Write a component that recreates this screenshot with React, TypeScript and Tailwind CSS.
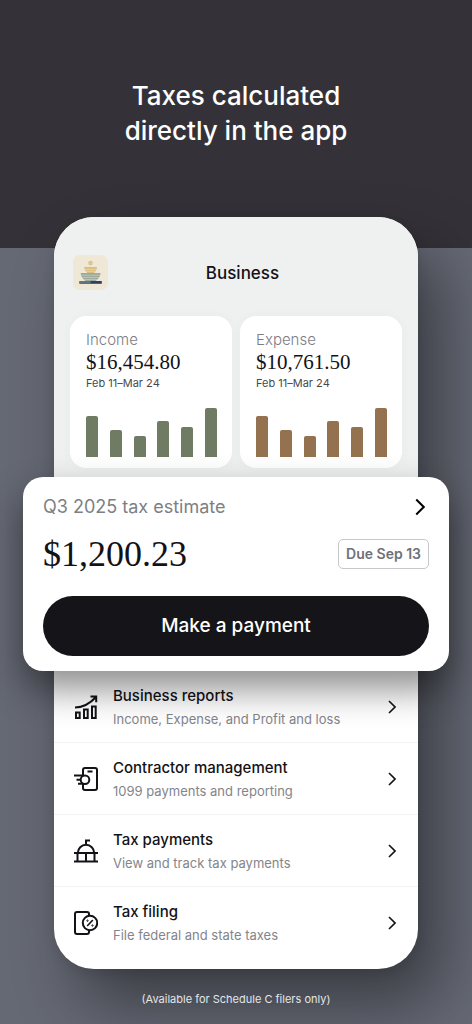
import React from 'react';

interface ChartCardProps {
  label: string;
  amount: string;
  barClass: string;
}

interface MenuRowProps {
  title: string;
  text: string;
  icon: React.ReactNode;
}

const bars = [41, 27, 21, 36, 30, 49];

const Logo = () => (
  <svg viewBox="0 0 35 35" className="size-[35px]" role="img" aria-label="Business logo">
    <rect width="35" height="35" rx="7" fill="#efe8d6" />
    <circle cx="17.5" cy="8" r="2.3" fill="#d9c08a" />
    <path d="M15.4 8h4.2" stroke="#e8d9b4" strokeWidth=".6" />
    <path d="M11.2 12h12.8c-.3 3-1.6 4.8-3 6h-6.8c-1.5-1.2-2.7-3-3-6z" fill="#dcbe7c" />
    <path d="M12 14.3h11.2M13 16.3h9.2" stroke="#eee0bc" strokeWidth=".6" />
    <path d="M7.6 18h20c-.4 3.8-2.4 6.4-5 8h-10c-2.6-1.6-4.6-4.2-5-8z" fill="#9dab9f" />
    <path d="M8.2 20.3h18.8M9.4 22.5h16.4M11 24.5h13.2" stroke="#c9cfc0" strokeWidth=".7" />
    <rect x="6.500" y="26" width="22.300" height="2.800" fill="#2c4260" />
    <rect x="6.500" y="26" width="11" height="2.800" fill="#667480" />
  </svg>
);

const iconProps = {
  viewBox: '0 0 24 24',
  fill: 'none',
  stroke: 'currentColor',
  strokeWidth: 2,
  className: 'size-6 shrink-0',
  'aria-hidden': true,
};

const ReportsIcon = () => (
  <svg {...iconProps}>
    <path d="M1 12.500c9 0 15-4 21-10.500M16.500 1.500h5.700v5.700" />
    <path d="M2 17.500h3.700v5.500H2zM10 14.500h3.700V23H10zM18 11.500h3.700V23H18z" />
  </svg>
);

const ContractorIcon = () => (
  <svg {...iconProps}>
    <path d="M9 8V3a2 2 0 0 1 2-2h10a2 2 0 0 1 2 2v18a2 2 0 0 1-2 2H11a2 2 0 0 1-2-2v-4" />
    <circle cx="11" cy="12.700" r="4.300" />
    <path d="M0 8.600h9M2.500 12.700h4M4 16.800h5M13.500 4.500h5" />
  </svg>
);

const PaymentsIcon = () => (
  <svg {...iconProps}>
    <path d="M0 14h24M0 22.500h24M3.500 14v8.500M20.500 14v8.500M12 14v8.500" />
    <path d="M3.800 14a8.200 8.200 0 0 1 16.400 0M12 6V1.500h4" />
  </svg>
);

const FilingIcon = () => (
  <svg {...iconProps}>
    <path d="M15 5V3a2 2 0 0 0-2-2H3a2 2 0 0 0-2 2v18a2 2 0 0 0 2 2h10a2 2 0 0 0 2-2v-2" />
    <circle cx="16" cy="12" r="7.200" />
    <path d="M13.200 15l5.600-6" strokeWidth="1.600" />
    <circle cx="13.500" cy="9.700" r=".7" strokeWidth="1" />
    <circle cx="18.500" cy="14.500" r=".7" strokeWidth="1" />
  </svg>
);

const Chevron = ({ className }: { className: string }) => (
  <svg viewBox="0 0 8 14" fill="none" stroke="currentColor" strokeWidth="1.600" className={className} aria-hidden="true">
    <path d="M1 1l6 6-6 6" />
  </svg>
);

const ChartCard = ({ label, amount, barClass }: ChartCardProps) => (
  <section className="flex-1 rounded-2xl bg-white pt-3.5 pr-[15px] pb-[11px] pl-4 shadow-[0_0_12px_rgba(0,0,0,0.03)]">
    <h2 className="text-[15px] leading-5 font-light text-[#7b7d83]">{label}</h2>
    <p className="font-['Liberation_Serif',serif] text-[21px] leading-6 text-[#131217]">{amount}</p>
    <p className="text-[11px] leading-[18px] text-[#48494f]">Feb 11–Mar 24</p>
    <div className="mt-4 flex h-[49px] items-end justify-between">
      {bars.map((height, i) => (
        <div key={i} className={`w-3 rounded-t-xs ${barClass}`} style={{ height }} />
      ))}
    </div>
  </section>
);

const MenuRow = ({ title, text, icon }: MenuRowProps) => (
  <li className="border-b border-[#f3f3f4] last:border-transparent">
    <a href="#" className="flex h-[71px] items-center gap-[15px] pr-[22px] pl-5 text-[#131217]">
      {icon}
      <span className="flex-1">
        <span className="block text-[15px] leading-6 font-medium">{title}</span>
        <span className="block text-[13px] leading-[22px] text-[#83858b]">{text}</span>
      </span>
      <Chevron className="h-3.5 w-2" />
    </a>
  </li>
);

const App = () => {
  return (
    <main className="min-h-screen overflow-hidden bg-[#656974] font-['Inter',sans-serif]">
      <header className="bg-[#343238] pt-[78px] pb-[100px] text-center">
        <h1 className="text-[26px] leading-[35px] font-medium text-white">
          Taxes calculated
          <br />
          directly in the app
        </h1>
      </header>

      <div className="relative mx-[54px] -mt-[31px] rounded-[40px] bg-white pb-2.5 shadow-[24px_36px_64px_rgba(0,0,0,0.42),0_4px_12px_rgba(0,0,0,0.1)]">
        <div className="rounded-t-[40px] bg-[#eff1f1] pt-[38px] pb-[9px]">
          <div className="flex items-center pr-[41px] pl-[19px]">
            <Logo />
            <p className="flex-1 text-center text-[17px] leading-6 font-medium text-[#131217]">Business</p>
          </div>
          <div className="mt-[26px] flex gap-2 px-4">
            <ChartCard label="Income" amount="$16,454.80" barClass="bg-[#6f7b63]" />
            <ChartCard label="Expense" amount="$10,761.50" barClass="bg-[#94714f]" />
          </div>
        </div>

        <section className="relative -mx-[31px] rounded-[20px] bg-white px-5 pt-[18px] pb-[15px] shadow-[0_18px_36px_rgba(0,0,0,0.45)]">
          <div className="flex h-6 items-center justify-between pr-1">
            <h2 className="text-[18px] leading-6 text-[#7d7f85]">Q3 2025 tax estimate</h2>
            <Chevron className="h-[18px] w-2.5" />
          </div>
          <div className="mt-5 flex h-[30px] items-center justify-between">
            <p className="font-['Liberation_Serif',serif] text-[36px] leading-[30px] text-[#131217]">$1,200.23</p>
            <span className="rounded-[5px] border border-[#c6c7ca] px-[7px] text-[14px] leading-7 font-semibold text-[#6f7178]">
              Due Sep 13
            </span>
          </div>
          <button className="mt-[27px] h-[60px] w-full rounded-full bg-[#151419] text-[19px] font-medium text-white">
            Make a payment
          </button>
        </section>

        <ul>
          <MenuRow title="Business reports" text="Income, Expense, and Profit and loss" icon={<ReportsIcon />} />
          <MenuRow title="Contractor management" text="1099 payments and reporting" icon={<ContractorIcon />} />
          <MenuRow title="Tax payments" text="View and track tax payments" icon={<PaymentsIcon />} />
          <MenuRow title="Tax filing" text="File federal and state taxes" icon={<FilingIcon />} />
        </ul>
      </div>

      <footer className="relative py-5 text-center text-[11px] leading-5 text-[#e4e5e7]">
        (Available for Schedule C filers only)
      </footer>
    </main>
  );
};

export default App;
